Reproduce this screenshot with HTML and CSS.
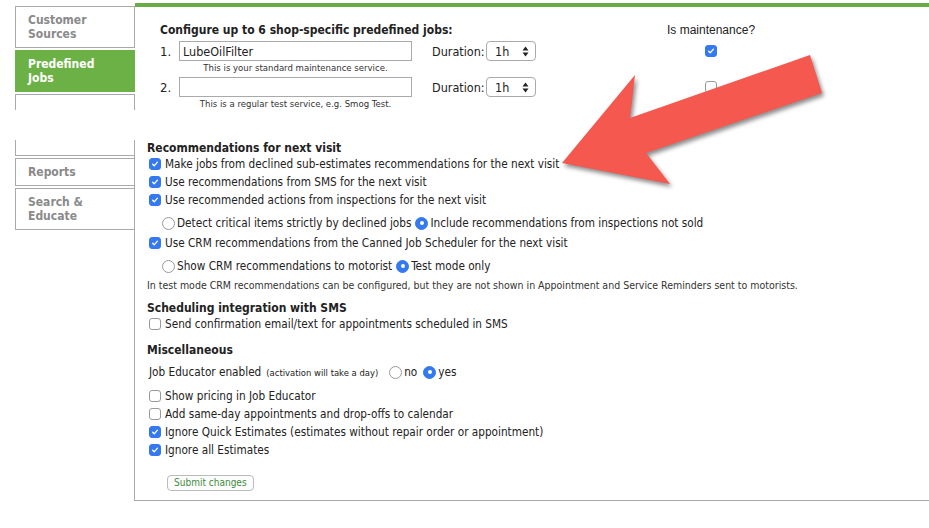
FILE: index.html
```html
<!DOCTYPE html>
<html lang="en">
<head>
  <meta charset="UTF-8" />
  <title>Shop Settings</title>
  <link rel="stylesheet" href="styles.css">
</head>
<body>
  <div class="frag frag-top">
    <nav class="tabs">
      <div class="tab">Customer<br>Sources</div>
      <div class="tab active">Predefined<br>Jobs</div>
      <div class="tab tab-empty"></div>
    </nav>
    <section class="panel">
      <div class="jobs">
        <div class="jobs-title">Configure up to 6 shop-specific predefined jobs:</div>
        <div class="maint-title">Is maintenance?</div>

        <div class="num">1.</div>
        <input class="name" type="text" value="LubeOilFilter">
        <div></div>
        <div class="dur">Duration:</div>
        <span class="sel">1h <svg width="7" height="11" viewBox="0 0 7 11"><path d="M3.5 0.5L6.5 4.5H0.5Z M3.5 10.5L6.5 6.5H0.5Z" fill="#222"/></svg></span>
        <div></div>
        <div class="maint"><span class="cb on"><svg viewBox="0 0 12 12"><path d="M3.2 6.3l1.9 1.9 3.8-4.4"/></svg></span></div>
        <div class="caption">This is your standard maintenance service.</div>

        <div class="num">2.</div>
        <input class="name" type="text" value="">
        <div></div>
        <div class="dur">Duration:</div>
        <span class="sel">1h <svg width="7" height="11" viewBox="0 0 7 11"><path d="M3.5 0.5L6.5 4.5H0.5Z M3.5 10.5L6.5 6.5H0.5Z" fill="#222"/></svg></span>
        <div></div>
        <div class="maint"><span class="cb"></span></div>
        <div class="caption">This is a regular test service, e.g. Smog Test.</div>
      </div>
    </section>
  </div>

  <div class="frag frag-bottom">
    <nav class="tabs">
      <div class="tab tab-cut"></div>
      <div class="tab">Reports</div>
      <div class="tab">Search &amp;<br>Educate</div>
    </nav>
    <section class="panel">
      <h3 class="group group-first">Recommendations for next visit</h3>
      <label class="opt"><span class="cb on"><svg viewBox="0 0 12 12"><path d="M3.2 6.3l1.9 1.9 3.8-4.4"/></svg></span>Make jobs from declined sub-estimates recommendations for the next visit</label>
      <label class="opt"><span class="cb on"><svg viewBox="0 0 12 12"><path d="M3.2 6.3l1.9 1.9 3.8-4.4"/></svg></span>Use recommendations from SMS for the next visit</label>
      <label class="opt"><span class="cb on"><svg viewBox="0 0 12 12"><path d="M3.2 6.3l1.9 1.9 3.8-4.4"/></svg></span>Use recommended actions from inspections for the next visit</label>
      <div class="radios">
        <label class="rad"><span class="rd"></span>Detect critical items strictly by declined jobs</label>
        <label class="rad"><span class="rd on"></span>Include recommendations from inspections not sold</label>
      </div>
      <label class="opt"><span class="cb on"><svg viewBox="0 0 12 12"><path d="M3.2 6.3l1.9 1.9 3.8-4.4"/></svg></span>Use CRM recommendations from the Canned Job Scheduler for the next visit</label>
      <div class="radios">
        <label class="rad"><span class="rd"></span>Show CRM recommendations to motorist</label>
        <label class="rad"><span class="rd on"></span>Test mode only</label>
      </div>
      <p class="note">In test mode CRM recommendations can be configured, but they are not shown in Appointment and Service Reminders sent to motorists.</p>

      <h3 class="group">Scheduling integration with SMS</h3>
      <label class="opt"><span class="cb"></span>Send confirmation email/text for appointments scheduled in SMS</label>

      <h3 class="group group-misc">Miscellaneous</h3>
      <div class="educator">
        <span>Job Educator enabled</span>
        <small>(activation will take a day)</small>
        <label class="rad"><span class="rd"></span>no</label>
        <label class="rad"><span class="rd on"></span>yes</label>
      </div>
      <div class="misc-opts">
        <label class="opt"><span class="cb"></span>Show pricing in Job Educator</label>
        <label class="opt"><span class="cb"></span>Add same-day appointments and drop-offs to calendar</label>
        <label class="opt"><span class="cb on"><svg viewBox="0 0 12 12"><path d="M3.2 6.3l1.9 1.9 3.8-4.4"/></svg></span>Ignore Quick Estimates (estimates without repair order or appointment)</label>
        <label class="opt"><span class="cb on"><svg viewBox="0 0 12 12"><path d="M3.2 6.3l1.9 1.9 3.8-4.4"/></svg></span>Ignore all Estimates</label>
      </div>
      <button class="submit">Submit changes</button>
    </section>
  </div>

  <svg class="arrow" width="929" height="528" viewBox="0 0 929 528">
    <polygon points="562,163 635,75 630,118 810,55 822,93 646,153 670,184" fill="#f4584e"/>
  </svg>
</body>
</html>
```

FILE: styles.css
```css
body {
  margin: 0;
  font-family: "DejaVu Sans Condensed", "Liberation Sans", sans-serif;
  font-size: 11.7px;
  color: #222;
  background-color: #fff;
}

.frag {
  display: flex;
}

.frag-top {
  height: 107px;
  margin-top: 3px;
  overflow: hidden;
}

.frag-bottom {
  margin-top: 30px;
}

.tabs {
  width: 120px;
  margin-left: 15px;
  display: flex;
  flex-direction: column;
  gap: 2px;
  flex: none;
}

.frag-top .tabs {
  padding-top: 3px;
}

.tab {
  flex: none;
  border: 1px solid #aaa;
  padding: 6px 12px;
  line-height: 14px;
  font-size: 12px;
  font-weight: bold;
  color: #8a8a8a;
}

.tab.active {
  background-color: #6cb146;
  border-color: #6cb146;
  color: #fff;
}

.tab-empty {
  height: 40px;
  padding: 0;
}

.tab-cut {
  height: 15px;
  padding: 0;
  border-top: none;
}

.panel {
  flex: 1;
}

.frag-top .panel {
  border-top: 4px solid #6aab45;
  padding: 15px 0 0 25px;
}

.frag-bottom .panel {
  margin-left: -1px;
  border-left: 1px solid #aaa;
  border-bottom: 1px solid #aaa;
  padding: 1px 0 9px 12px;
}

/* predefined jobs */
.jobs {
  display: grid;
  grid-template-columns: 19px 233px 20px 54px 50px 131px 87px;
  align-items: center;
}

.jobs-title {
  grid-column: 1 / 7;
  font-size: 12px;
  font-weight: bold;
  line-height: 16px;
  margin-bottom: 3px;
}

.maint-title {
  font-family: "Liberation Sans", sans-serif;
  font-size: 12px;
  text-align: center;
  line-height: 16px;
  margin-bottom: 3px;
  white-space: nowrap;
}

.num {
  grid-column: 1;
  font-size: 13px;
}

.dur {
  font-size: 12.5px;
}

.name {
  height: 20px;
  box-sizing: border-box;
  border: 1px solid #aaa;
  padding: 0 3px;
  font-family: inherit;
  font-size: 12.5px;
  color: #222;
  margin: 0;
}

.sel {
  height: 20px;
  box-sizing: border-box;
  border: 1px solid #aaa;
  border-radius: 4px;
  display: flex;
  align-items: center;
  justify-content: space-between;
  padding: 0 6px 0 8px;
  font-size: 12.5px;
}

.maint {
  display: flex;
  justify-content: center;
}

.caption {
  grid-column: 2;
  text-align: center;
  font-size: 9.5px;
  line-height: 14px;
  color: #333;
  margin-bottom: 2px;
  white-space: nowrap;
}

/* checkboxes and radios */
.cb {
  width: 12px;
  height: 12px;
  box-sizing: border-box;
  border: 1px solid #999;
  border-radius: 3px;
  background-color: #fff;
  display: inline-flex;
  flex: none;
}

.cb.on {
  background-color: #3479f0;
  border-color: #3479f0;
}

.cb svg {
  width: 10px;
  height: 10px;
  fill: none;
  stroke: #fff;
  stroke-width: 1.6;
  stroke-linecap: round;
  stroke-linejoin: round;
}

.rd {
  width: 13px;
  height: 13px;
  box-sizing: border-box;
  border: 1px solid #999;
  border-radius: 50%;
  background-color: #fff;
  display: inline-flex;
  align-items: center;
  justify-content: center;
  flex: none;
  margin-right: 2px;
}

.rd.on {
  background-color: #3479f0;
  border-color: #3479f0;
}

.rd.on::after {
  content: "";
  width: 4px;
  height: 4px;
  border-radius: 50%;
  background-color: #fff;
}

.group {
  font-size: 12px;
  line-height: 14px;
  margin: 8px 0 0;
}

.group-first {
  margin-top: 0;
}

.group-misc {
  margin-top: 10px;
}

.opt {
  display: flex;
  align-items: center;
  gap: 4px;
  height: 18px;
  margin-left: 2px;
}

.radios {
  display: flex;
  align-items: center;
  gap: 4px;
  height: 22px;
  margin: 3px 0 0 15px;
}

.rad {
  display: flex;
  align-items: center;
}

.note {
  font-size: 10.5px;
  line-height: 16px;
  margin: 0;
  color: #333;
}

.educator {
  display: flex;
  align-items: center;
  height: 22px;
  margin: 4px 0 0 2px;
}

.educator small {
  font-size: 9.4px;
  margin: 1px 11px 0 5px;
}

.educator .rad {
  margin-right: 6px;
}

.misc-opts {
  margin-top: 4px;
}

.submit {
  margin: 16px 0 0 20px;
  height: 16px;
  padding: 0 6px;
  font-family: inherit;
  font-size: 10px;
  color: #3c8c3c;
  background-color: #fcfcfc;
  border: 1px solid #bbb;
  border-radius: 4px;
  display: block;
  line-height: 14px;
}

.arrow {
  position: absolute;
  top: 0;
  left: 0;
  pointer-events: none;
  filter: drop-shadow(2px 3px 2px rgba(0, 0, 0, 0.45));
}
```
